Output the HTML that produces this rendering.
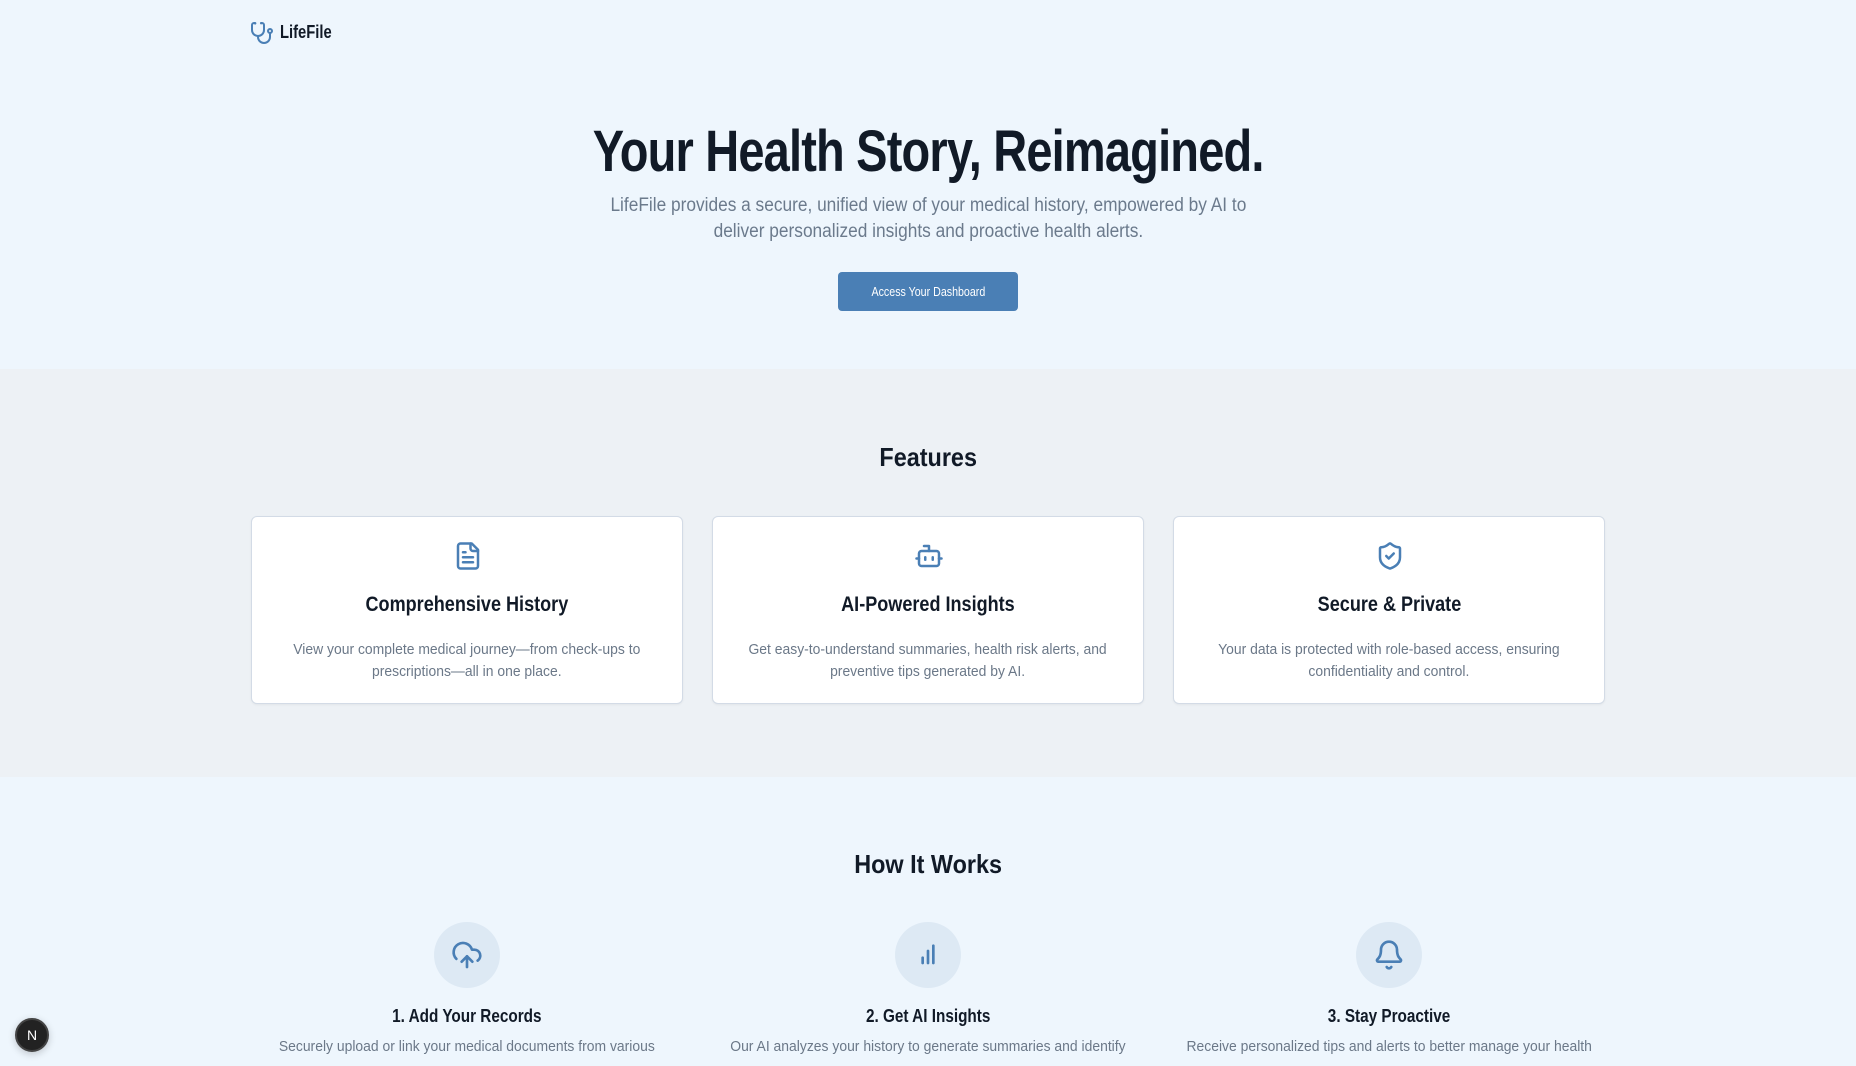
<!DOCTYPE html>
<html><head><meta charset="utf-8"><style>
*{margin:0;padding:0;box-sizing:border-box}
body{width:1856px;height:1066px;overflow:hidden;background:#eef6fd;font-family:"Liberation Sans Narrow","Liberation Sans",sans-serif;color:#111a27;position:relative}
.abs{position:absolute}
.c{position:absolute;left:0;width:1856px;text-align:center}
.n{display:inline-block;transform:scaleX(.82);transform-origin:center}
.feat{top:369px;height:408px;background:#edf1f5;left:0;width:1856px;position:absolute}
.card{position:absolute;top:516px;width:432px;height:188px;background:#fff;border:1px solid #d3dbe6;border-radius:6px;box-shadow:0 1px 2px rgba(0,0,0,.05);text-align:center}
.card svg{position:absolute;left:201px;top:24px}
.card h3{position:absolute;top:76px;left:0;width:100%;font-size:21px;font-weight:bold}
.card p{position:absolute;top:122px;left:10px;right:10px;font-size:14.5px;line-height:22px;color:#6b7888}
.circ{position:absolute;top:922px;width:66px;height:66px;border-radius:50%;background:#dde9f4}
.circ svg{position:absolute;left:17px;top:17px}
.st{position:absolute;top:1006px;width:500px;text-align:center;font-size:18px;font-weight:bold}
.sd{position:absolute;top:1039px;width:500px;text-align:center;font-size:14.5px;color:#6b7888}
</style></head><body>
<svg class="abs" style="left:250px;top:21px" width="24" height="24" viewBox="0 0 24 24" fill="none" stroke="#4a7fb5" stroke-width="2" stroke-linecap="round" stroke-linejoin="round"><path d="M4.8 2.3A.3.3 0 1 0 5 2H4a2 2 0 0 0-2 2v5a6 6 0 0 0 6 6 6 6 0 0 0 6-6V4a2 2 0 0 0-2-2h-1a.2.2 0 1 0 .3.3"/><path d="M8 15v1a6 6 0 0 0 6 6 6 6 0 0 0 6-6v-4"/><circle cx="20" cy="10" r="2"/></svg>
<div class="abs" style="left:280px;top:22px;font-size:18px;font-weight:bold"><span class="n" style="transform-origin:left">LifeFile</span></div>

<div class="c" style="top:118px;font-size:58px;font-weight:bold;letter-spacing:-1px"><span class="n" style="transform:scaleX(.81)">Your Health Story, Reimagined.</span></div>
<div class="c" style="top:193px;font-size:19px;line-height:26px;color:#6b7a8c"><span class="n" style="transform:scaleX(.91)">LifeFile provides a secure, unified view of your medical history, empowered by AI to<br>deliver personalized insights and proactive health alerts.</span></div>
<div class="abs" style="left:838px;top:272px;width:180px;height:39px;background:#4a7fb5;border-radius:4px;color:#fff;font-size:13px;line-height:39px;text-align:center"><span class="n">Access Your Dashboard</span></div>

<div class="feat"></div>
<div class="c" style="top:442px;font-size:26px;font-weight:bold"><span class="n" style="transform:scaleX(.9)">Features</span></div>

<div class="card" style="left:251px">
<svg width="30" height="30" viewBox="0 0 24 24" fill="none" stroke="#4a7fb5" stroke-width="2" stroke-linecap="round" stroke-linejoin="round"><path d="M15 2H6a2 2 0 0 0-2 2v16a2 2 0 0 0 2 2h12a2 2 0 0 0 2-2V7Z"/><path d="M14 2v4a2 2 0 0 0 2 2h4"/><path d="M10 9H8M16 13H8M16 17H8"/></svg>
<h3><span class="n" style="transform:scaleX(.86)">Comprehensive History</span></h3>
<p><span class="n" style="transform:scaleX(.96)">View your complete medical journey—from check-ups to<br>prescriptions—all in one place.</span></p></div>
<div class="card" style="left:712px">
<svg width="30" height="30" viewBox="0 0 24 24" fill="none" stroke="#4a7fb5" stroke-width="2" stroke-linecap="round" stroke-linejoin="round"><path d="M12 8V4H8"/><rect width="16" height="12" x="4" y="8" rx="2"/><path d="M2 14h2M20 14h2M15 13v2M9 13v2"/></svg>
<h3><span class="n" style="transform:scaleX(.86)">AI-Powered Insights</span></h3>
<p><span class="n" style="transform:scaleX(.96)">Get easy-to-understand summaries, health risk alerts, and<br>preventive tips generated by AI.</span></p></div>
<div class="card" style="left:1173px">
<svg width="30" height="30" viewBox="0 0 24 24" fill="none" stroke="#4a7fb5" stroke-width="2" stroke-linecap="round" stroke-linejoin="round"><path d="M20 13c0 5-3.5 7.5-7.66 8.950a1 1 0 0 1-.67-.01C7.5 20.5 4 18 4 13V6a1 1 0 0 1 1-1c2 0 4.5-1.2 6.24-2.72a1.17 1.17 0 0 1 1.52 0C14.51 3.81 17 5 19 5a1 1 0 0 1 1 1z"/><path d="m9 12 2 2 4-4"/></svg>
<h3><span class="n" style="transform:scaleX(.86)">Secure &amp; Private</span></h3>
<p><span class="n" style="transform:scaleX(.96)">Your data is protected with role-based access, ensuring<br>confidentiality and control.</span></p></div>

<div class="c" style="top:849px;font-size:26px;font-weight:bold"><span class="n" style="transform:scaleX(.9)">How It Works</span></div>

<div class="circ" style="left:434px"><svg width="32" height="32" viewBox="0 0 24 24" fill="none" stroke="#4a7fb5" stroke-width="2" stroke-linecap="round" stroke-linejoin="round"><path d="M12 13v8"/><path d="M4 14.9A7 7 0 1 1 15.7 8h1.8a4.5 4.5 0 0 1 2.5 8.2"/><path d="m8 17 4-4 4 4"/></svg></div>
<div class="circ" style="left:895px"><svg width="32" height="32" viewBox="0 0 24 24" fill="none" stroke="#4a7fb5" stroke-width="2" stroke-linecap="round"><path d="M8 18v-4M12 18V9M16 18V5"/></svg></div>
<div class="circ" style="left:1356px"><svg width="32" height="32" viewBox="0 0 24 24" fill="none" stroke="#4a7fb5" stroke-width="2" stroke-linecap="round" stroke-linejoin="round"><path d="M10.3 21a1.94 1.94 0 0 0 3.4 0"/><path d="M3.26 15.33A1 1 0 0 0 4 17h16a1 1 0 0 0 .74-1.67C19.41 13.96 18 12.5 18 8A6 6 0 0 0 6 8c0 4.5-1.41 5.960-2.74 7.33"/></svg></div>

<div class="st" style="left:217px"><span class="n" style="transform:scaleX(.85)">1. Add Your Records</span></div>
<div class="st" style="left:678px"><span class="n" style="transform:scaleX(.85)">2. Get AI Insights</span></div>
<div class="st" style="left:1139px"><span class="n" style="transform:scaleX(.85)">3. Stay Proactive</span></div>
<div class="sd" style="left:217px"><span class="n" style="transform:scaleX(.96)">Securely upload or link your medical documents from various</span></div>
<div class="sd" style="left:678px"><span class="n" style="transform:scaleX(.96)">Our AI analyzes your history to generate summaries and identify</span></div>
<div class="sd" style="left:1139px"><span class="n" style="transform:scaleX(.96)">Receive personalized tips and alerts to better manage your health</span></div>

<div class="abs" style="left:15px;top:1018px;width:34px;height:34px;border-radius:50%;background:#222;border:2px solid #444;color:#fff;font-size:14px;line-height:30px;text-align:center;box-shadow:0 2px 8px rgba(0,0,0,.2)">N</div>
</body></html>
